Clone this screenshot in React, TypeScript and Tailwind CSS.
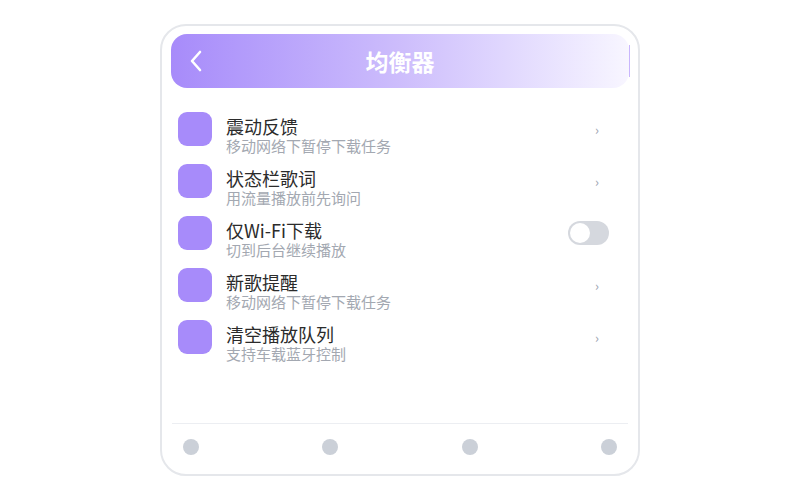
import { ReactNode } from 'react';

type Row = { title: string; sub: string; toggle?: boolean };

// 设置项
const rows: Row[] = [
  { title: '震动反馈', sub: '移动网络下暂停下载任务' },
  { title: '状态栏歌词', sub: '用流量播放前先询问' },
  { title: '仅Wi-Fi下载', sub: '切到后台继续播放', toggle: true },
  { title: '新歌提醒', sub: '移动网络下暂停下载任务' },
  { title: '清空播放队列', sub: '支持车载蓝牙控制' },
];

function Toggle() {
  return (
    <div className="w-[41px] h-[24px] rounded-full bg-[#d5d8de] p-[2px] flex items-center">
      <div className="w-[20px] h-[20px] rounded-full bg-white"></div>
    </div>
  );
}

function SettingRow({ row }: { row: Row }) {
  let right: ReactNode = <span className="text-[13px] text-[#9ca3af] mr-[10px] leading-none">›</span>;
  if (row.toggle) right = <Toggle />;
  return (
    <div className="h-[52px] flex items-start">
      <div className="w-[34px] h-[34px] rounded-[9px] bg-[#a78bfa] flex-shrink-0"></div>
      <div className="ml-[14px] mt-[3px] flex-1 min-w-0">
        <div className="text-[18px] leading-[22px] text-[#2b2b2b]">{row.title}</div>
        <div className="text-[15px] leading-[18px] text-[#a3a8b1]">{row.sub}</div>
      </div>
      <div className="h-[34px] flex items-center">{right}</div>
    </div>
  );
}

export default function App() {
  return (
    <main
      className="w-[800px] h-[500px] bg-white flex items-center justify-center"
      style={{ fontFamily: '"Noto Sans CJK SC", "Noto Sans", sans-serif' }}
    >
      <div className="w-[480px] h-[452px] border-2 border-[#e5e7eb] rounded-[26px] flex flex-col overflow-hidden">
        {/* Header */}
        <div className="mt-2 mx-[9px] h-[54px] rounded-[16px] bg-gradient-to-r from-[#a78bfa] via-[#cdbdfc] to-[#f8f6ff] flex items-center relative">
          <svg width="14" height="22" viewBox="0 0 14 22" className="ml-[18px]">
            <polyline points="11,2 3,11 11,20" fill="none" stroke="white" strokeWidth="2.6" strokeLinecap="round" strokeLinejoin="round" />
          </svg>
          <h1 className="absolute left-0 right-0 text-center text-[23px] font-bold text-white pointer-events-none">均衡器</h1>
          <div className="ml-auto mr-[-1px] w-px h-[32px] bg-[#c9b6fd]"></div>
        </div>

        {/* Lista */}
        <div className="flex-1 pt-[24px] pl-[16px] pr-[29px]">
          {rows.map((r) => (
            <SettingRow key={r.title} row={r} />
          ))}
        </div>

        {/* Nav */}
        <div className="mx-[10px] border-t border-[#eceef2] pt-[15px] pb-[19px] px-[11px] flex justify-between">
          <div className="w-4 h-4 rounded-full bg-[#cbd0d8]"></div>
          <div className="w-4 h-4 rounded-full bg-[#cbd0d8]"></div>
          <div className="w-4 h-4 rounded-full bg-[#cbd0d8]"></div>
          <div className="w-4 h-4 rounded-full bg-[#cbd0d8]"></div>
        </div>
      </div>
    </main>
  );
}
